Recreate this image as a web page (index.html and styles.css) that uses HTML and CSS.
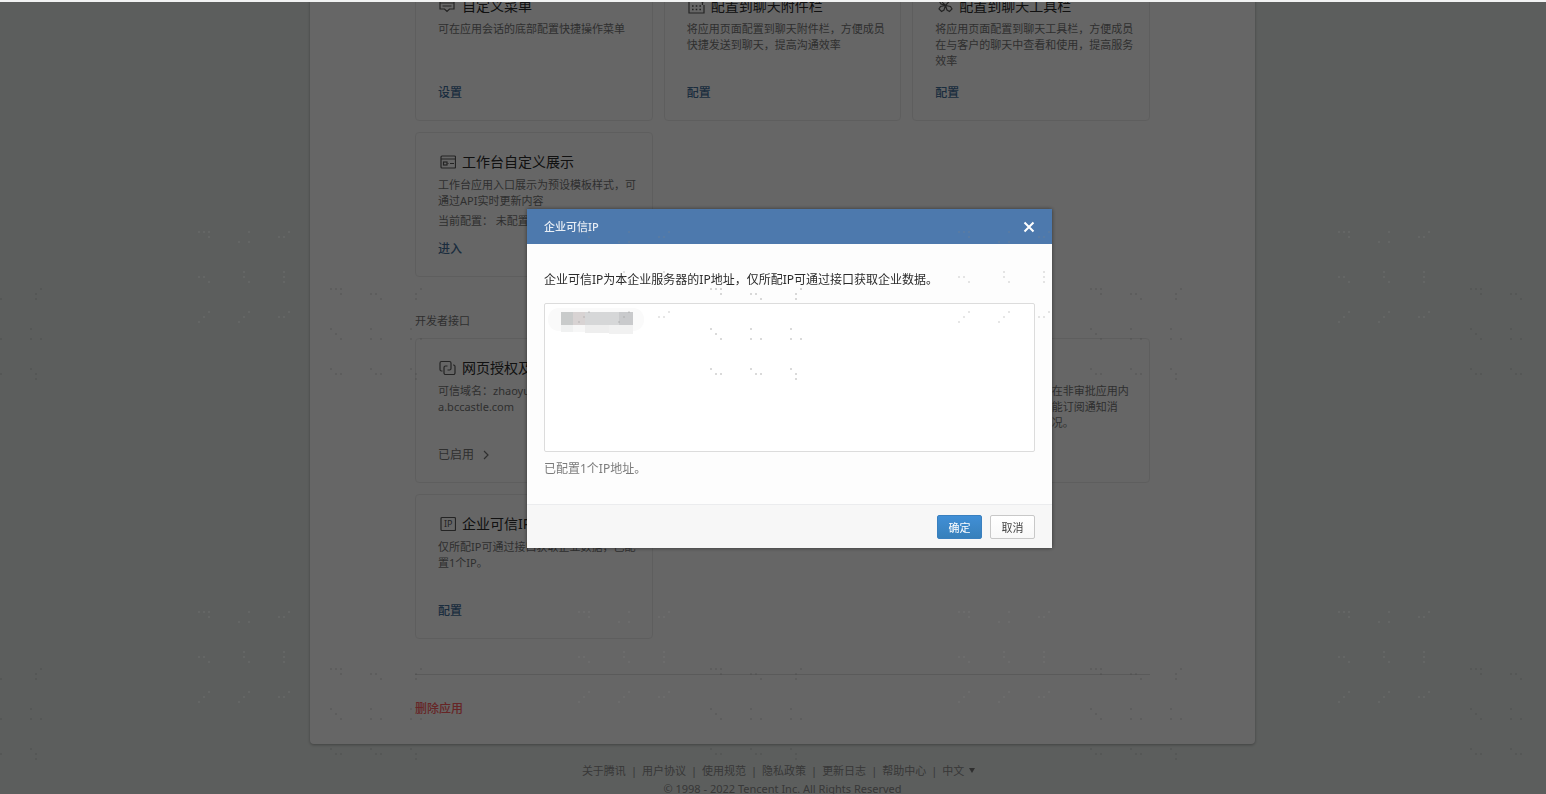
FILE: index.html
```html
<!DOCTYPE html>
<html lang="zh-CN">
<head>
  <meta charset="UTF-8">
  <meta name="viewport" content="width=device-width, initial-scale=1.0">
  <title>企业可信IP</title>
  <link rel="stylesheet" href="styles.css">
</head>
<body>
  <div class="page">
    <main class="panel">
      <section class="cards">
        <article class="card">
          <h3 class="card-title">
            <svg class="icon" viewBox="0 0 18 18"><path d="M2 2.500h14v9.500h-4.500L9 14.500 6.500 12H2zM2 6h14M4.500 9h9"/></svg>
            自定义菜单
          </h3>
          <p class="card-desc">可在应用会话的底部配置快捷操作菜单</p>
          <a class="card-link" href="#">设置</a>
        </article>
        <article class="card">
          <h3 class="card-title">
            <svg class="icon" viewBox="0 0 18 18"><path d="M11 3H2v13h15V8M13 3l2.500 2.500L18 3M15.500 5.500V8"/><path class="dots" d="M5 9h1.600M8.700 9h1.600M12.400 9H14M5 12.500h1.600M8.700 12.500h1.600M12.400 12.500H14"/></svg>
            配置到聊天附件栏
          </h3>
          <p class="card-desc">将应用页面配置到聊天附件栏，方便成员快捷发送到聊天，提高沟通效率</p>
          <a class="card-link" href="#">配置</a>
        </article>
        <article class="card">
          <h3 class="card-title">
            <svg class="icon" viewBox="0 0 18 18"><path d="M10.500 8.500L7.500 5.500 7 3 4.500 2M10.500 8.500L15 3.500M10.500 8.500l5 1 1.500 2.500-2.500 2.500-2.500-1.500zM10.500 8.500l-5 1L4 12l2.500 2.500L9 13zM10.500 8.500L6 7 4.500 4.500"/></svg>
            配置到聊天工具栏
          </h3>
          <p class="card-desc">将应用页面配置到聊天工具栏，方便成员在与客户的聊天中查看和使用，提高服务效率</p>
          <a class="card-link" href="#">配置</a>
        </article>
        <article class="card">
          <h3 class="card-title">
            <svg class="icon" viewBox="0 0 18 18"><rect x="3" y="3" width="14.500" height="12" rx="1"/><path d="M3 6h14.500M12 10.500h4M9.500 10.500h1"/><rect x="5.500" y="9" width="3.500" height="3"/></svg>
            工作台自定义展示
          </h3>
          <p class="card-desc">工作台应用入口展示为预设模板样式，可通过API实时更新内容</p>
          <p class="card-desc card-state">当前配置： 未配置</p>
          <a class="card-link" href="#">进入</a>
        </article>
      </section>

      <h2 class="section-title">开发者接口</h2>
      <section class="cards">
        <article class="card">
          <h3 class="card-title">
            <svg class="icon" viewBox="0 0 18 18"><path d="M4.500 12H3.500A1.500 1.500 0 0 1 2 10.500V4A1.500 1.500 0 0 1 3.500 2.500h8A1.500 1.500 0 0 1 13 4v5.500A1.500 1.500 0 0 1 11.500 11H9.500M15 6h.5A1.500 1.500 0 0 1 17 7.500V14a1.500 1.500 0 0 1-1.500 1.500h-8A1.500 1.500 0 0 1 6 14V8.500A1.500 1.500 0 0 1 7.500 7h2"/></svg>
            网页授权及JS-SDK
          </h3>
          <p class="card-desc">可信域名：zhaoyun-<br>a.bccastle.com</p>
          <a class="card-link card-link-muted" href="#">已启用
            <svg class="arrow" viewBox="0 0 8 10"><path d="M2 1l4 4-4 4"/></svg>
          </a>
        </article>
        <article class="card">
          <h3 class="card-title">企业微信授权登录</h3>
          <a class="card-link" href="#">设置</a>
        </article>
        <article class="card">
          <h3 class="card-title">审批接口</h3>
          <p class="card-desc">开启后即可通过审批API在非审批应用内<br>设置流程，并使用API功能订阅通知消<br>息，通过API及时了解情况。</p>
        </article>
        <article class="card">
          <h3 class="card-title">
            <svg class="icon" viewBox="0 0 18 18"><rect x="3" y="2.500" width="14.500" height="13" rx="1"/><text class="icon-text" x="6" y="12">IP</text></svg>
            企业可信IP
          </h3>
          <p class="card-desc">仅所配IP可通过接口获取企业数据，已配置1个IP。</p>
          <a class="card-link" href="#">配置</a>
        </article>
      </section>

      <div class="remove">
        <a href="#">删除应用</a>
      </div>
    </main>

    <footer class="footer">
      <nav class="footer-links">
        <a href="#">关于腾讯</a><i>|</i>
        <a href="#">用户协议</a><i>|</i>
        <a href="#">使用规范</a><i>|</i>
        <a href="#">隐私政策</a><i>|</i>
        <a href="#">更新日志</a><i>|</i>
        <a href="#">帮助中心</a><i>|</i>
        <a href="#">中文 <span class="caret"></span></a>
      </nav>
      <p>© 1998 - 2022 Tencent Inc. All Rights Reserved</p>
    </footer>
  </div>

  <div class="mask">
    <form class="dialog" role="dialog" aria-labelledby="dialog-title">
      <header class="dialog-head">
        <h2 id="dialog-title">企业可信IP</h2>
        <button class="dialog-close" type="button" aria-label="关闭">
          <svg viewBox="0 0 12 12"><path d="M1.500 1.500l9 9M10.500 1.500l-9 9"/></svg>
        </button>
      </header>
      <div class="dialog-body">
        <label for="ip-list">企业可信IP为本企业服务器的IP地址，仅所配IP可通过接口获取企业数据。</label>
        <div class="field">
          <textarea id="ip-list"></textarea>
          <svg class="mosaic" viewBox="0 0 96 28">
            <rect x="0" y="1" width="96" height="23" rx="11" fill="#fafafa"/>
            <rect x="13" y="5" width="12" height="13" fill="#c9cbcb"/>
            <rect x="25" y="5" width="12" height="13" fill="#d8d3d3"/>
            <rect x="37" y="5" width="34" height="13" fill="#d6d7d8"/>
            <rect x="71" y="5" width="14" height="13" fill="#c9cacc"/>
            <rect x="13" y="18" width="12" height="7" fill="#f0f1f1"/>
            <rect x="25" y="18" width="12" height="7" fill="#f7f7f7"/>
            <rect x="37" y="18" width="24" height="8" fill="#eeeeee"/>
            <rect x="61" y="18" width="24" height="9" fill="#f1f1f1"/>
          </svg>
        </div>
        <p class="dialog-tip">已配置1个IP地址。</p>
      </div>
      <footer class="dialog-foot">
        <button class="btn btn-primary" type="submit">确定</button>
        <button class="btn" type="button">取消</button>
      </footer>
    </form>
  </div>

  <!-- dotted watermark over the whole window -->
  <svg class="watermark" aria-hidden="true">
    <defs>
      <pattern id="wm-dark" x="330" y="288" width="380" height="380" patternUnits="userSpaceOnUse">
        <path d="M0 0h2M5 0h2M10 0h2M10 5h2M40 5h2M45 5h2M50 10h2M90 0h2M85 5h2M85 10h2M0 40h2M5 45h2M10 50h2M40 40h2M40 50h2M50 50h2M80 40h2M80 50h2M90 50h2M0 80h2M5 85h2M10 85h2M40 80h2M45 85h2M50 85h2M80 80h2M85 85h2M85 90h2" transform="translate(0 1)"/>
      </pattern>
      <pattern id="wm-light" x="578" y="231" width="380" height="380" patternUnits="userSpaceOnUse">
        <path d="M0 0h2M5 0h2M10 0h2M10 5h2M50 0h2M40 10h2M50 10h2M90 0h2M80 5h2M85 5h2M0 45h2M5 45h2M10 50h2M45 40h2M45 45h2M50 50h2M85 40h2M85 45h2M85 50h2M10 80h2M5 85h2M0 90h2M50 80h2M45 85h2M40 90h2M90 80h2M80 85h2M85 85h2" transform="translate(0 1)"/>
      </pattern>
    </defs>
    <rect width="100%" height="100%" fill="url(#wm-dark)"/>
    <rect width="100%" height="100%" fill="url(#wm-light)"/>
  </svg>
</body>
</html>
```
FILE: styles.css
```css
* {
  box-sizing: border-box;
  margin: 0;
  padding: 0;
}

body {
  height: 100vh;
  padding-top: 2px;
  background: #f2f3f3;
  color: #2b2b2b;
  font-family: "Noto Sans", "Noto Sans CJK SC", sans-serif;
  font-size: 12px;
  line-height: 16px;
  overflow: hidden;
}

a {
  color: inherit;
  text-decoration: none;
}

.page {
  height: 100%;
  padding-left: 19px;
  background: #e6ebe8;
  overflow: hidden;
}

.panel {
  max-width: 945px;
  margin: -60px auto 0;
  padding: 34px 105px 27px;
  background: #fff;
  border-radius: 4px;
  box-shadow: 0 1px 3px rgba(0, 0, 0, .3);
}

.cards {
  display: grid;
  grid-template-columns: repeat(3, 1fr);
  gap: 11px;
}

.card {
  display: flex;
  flex-direction: column;
  align-items: flex-start;
  height: 145px;
  padding: 19px 14px 19px 22px;
  border: 1px solid #ececec;
  border-radius: 4px;
}

.card-title {
  display: flex;
  align-items: center;
  gap: 6px;
  height: 20px;
  margin-bottom: 5px;
  color: #2b2b2b;
  font-size: 14px;
  font-weight: 400;
  white-space: nowrap;
}

.icon {
  width: 18px;
  height: 18px;
  fill: none;
  stroke: #5a5a5a;
  stroke-width: 1.2;
}

.icon .dots {
  stroke-width: 1.6;
}

.icon-text {
  fill: #5a5a5a;
  stroke: none;
  font-size: 9px;
}

.card-desc {
  color: #767676;
  font-size: 11px;
}

.card-state {
  margin-top: 4px;
}

.card-link {
  margin-top: auto;
  color: #45709c;
  font-weight: 500;
}

.card-link-muted {
  display: flex;
  align-items: center;
  gap: 8px;
  color: #767676;
  font-weight: 400;
}

.arrow {
  width: 8px;
  height: 10px;
  fill: none;
  stroke: #767676;
  stroke-width: 1.2;
}

.section-title {
  margin: 36px 0 9px;
  color: #767676;
  font-size: 11px;
  font-weight: 400;
}

.remove {
  margin-top: 35px;
  padding-top: 26px;
  border-top: 1px solid #e2e2e2;
  color: #ff5c60;
  font-weight: 500;
}

.footer {
  padding-top: 19px;
  color: #8c8c8c;
  font-size: 11px;
  text-align: center;
}

.footer-links {
  display: flex;
  justify-content: center;
  gap: 5px;
  margin-bottom: 2px;
  padding-right: 8px;
}

.footer-links i {
  font-style: normal;
}

.caret {
  display: inline-block;
  margin: 0 0 2px 2px;
  border: 3px solid transparent;
  border-top: 5px solid #777;
  border-bottom: 0;
}

.mask {
  position: fixed;
  inset: 2px 0 0;
  display: flex;
  align-items: center;
  justify-content: center;
  padding: 0 0 39px 33px;
  background: rgba(0, 0, 0, .6);
}

.dialog {
  width: 525px;
  background: #fdfdfd;
  box-shadow: 0 0 4px rgba(0, 0, 0, .5);
}

.dialog-head {
  display: flex;
  align-items: center;
  justify-content: space-between;
  height: 35px;
  padding: 0 17px;
  background: #4d79ad;
  color: #e8eef5;
}

.dialog-head h2 {
  font-size: 11px;
  font-weight: 500;
}

.dialog-close {
  display: flex;
  border: none;
  background: none;
  cursor: pointer;
}

.dialog-close svg {
  width: 12px;
  height: 12px;
  fill: none;
  stroke: #fff;
  stroke-width: 2;
}

.dialog-body {
  padding: 28px 17px 27px;
}

.dialog-body label {
  display: block;
  margin-bottom: 15px;
}

.field {
  position: relative;
}

.field textarea {
  display: block;
  width: 100%;
  height: 149px;
  padding: 8px 10px;
  border: 1px solid #dcdcdc;
  border-radius: 2px;
  background: #fff;
  font: inherit;
  outline: none;
  resize: none;
}

.mosaic {
  position: absolute;
  top: 4px;
  left: 4px;
  width: 96px;
  height: 28px;
  pointer-events: none;
}

.dialog-tip {
  margin-top: 9px;
  color: #7b7b7b;
}

.dialog-foot {
  display: flex;
  justify-content: flex-end;
  gap: 8px;
  padding: 10px 17px 9px;
  border-top: 1px solid #ebecee;
  background: #f7f7f7;
}

.btn {
  width: 45px;
  height: 24px;
  border: 1px solid #c8c8c8;
  border-radius: 2px;
  background: linear-gradient(#fff, #f8f8f8);
  color: #444;
  font-family: inherit;
  font-size: 11px;
  cursor: pointer;
}

.btn-primary {
  border-color: #3a80bf;
  background: linear-gradient(#418fd6, #3780bb);
  color: #fff;
}

.watermark {
  position: fixed;
  inset: 0;
  width: 100%;
  height: 100%;
  pointer-events: none;
}

.watermark path {
  fill: none;
  stroke: rgba(50, 50, 50, .18);
  stroke-width: 2;
}

#wm-light path {
  stroke: rgba(130, 130, 130, .2);
}
```
